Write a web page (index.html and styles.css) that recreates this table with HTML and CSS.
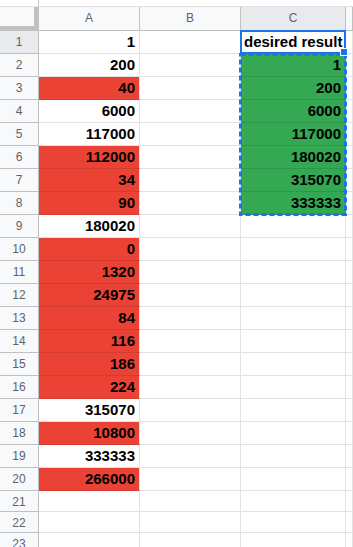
FILE: index.html
```html
<!DOCTYPE html>
<html>
<head>
<meta charset="utf-8">
<link rel="stylesheet" href="styles.css">
</head>
<body>
<div class="sheet">
  <div class="top first"></div><div class="top"></div><div class="top"></div><div class="top"></div><div class="top"></div>
  <div class="corner"></div><div class="ch">A</div><div class="ch">B</div><div class="ch sel">C</div><div class="ch"></div>

  <div class="rh sel">1</div><div class="c num">1</div><div class="c"></div><div class="c txt">desired result</div><div class="c"></div>
  <div class="rh">2</div><div class="c num">200</div><div class="c"></div><div class="c num g">1</div><div class="c"></div>
  <div class="rh">3</div><div class="c num r">40</div><div class="c"></div><div class="c num g">200</div><div class="c"></div>
  <div class="rh">4</div><div class="c num">6000</div><div class="c"></div><div class="c num g">6000</div><div class="c"></div>
  <div class="rh">5</div><div class="c num">117000</div><div class="c"></div><div class="c num g">117000</div><div class="c"></div>
  <div class="rh">6</div><div class="c num r">112000</div><div class="c"></div><div class="c num g">180020</div><div class="c"></div>
  <div class="rh">7</div><div class="c num r">34</div><div class="c"></div><div class="c num g">315070</div><div class="c"></div>
  <div class="rh">8</div><div class="c num r">90</div><div class="c"></div><div class="c num g">333333</div><div class="c"></div>
  <div class="rh">9</div><div class="c num">180020</div><div class="c"></div><div class="c"></div><div class="c"></div>
  <div class="rh">10</div><div class="c num r">0</div><div class="c"></div><div class="c"></div><div class="c"></div>
  <div class="rh">11</div><div class="c num r">1320</div><div class="c"></div><div class="c"></div><div class="c"></div>
  <div class="rh">12</div><div class="c num r">24975</div><div class="c"></div><div class="c"></div><div class="c"></div>
  <div class="rh">13</div><div class="c num r">84</div><div class="c"></div><div class="c"></div><div class="c"></div>
  <div class="rh">14</div><div class="c num r">116</div><div class="c"></div><div class="c"></div><div class="c"></div>
  <div class="rh">15</div><div class="c num r">186</div><div class="c"></div><div class="c"></div><div class="c"></div>
  <div class="rh">16</div><div class="c num r">224</div><div class="c"></div><div class="c"></div><div class="c"></div>
  <div class="rh">17</div><div class="c num">315070</div><div class="c"></div><div class="c"></div><div class="c"></div>
  <div class="rh">18</div><div class="c num r">10800</div><div class="c"></div><div class="c"></div><div class="c"></div>
  <div class="rh">19</div><div class="c num">333333</div><div class="c"></div><div class="c"></div><div class="c"></div>
  <div class="rh">20</div><div class="c num r">266000</div><div class="c"></div><div class="c"></div><div class="c"></div>
  <div class="rh">21</div><div class="c"></div><div class="c"></div><div class="c"></div><div class="c"></div>
  <div class="rh">22</div><div class="c"></div><div class="c"></div><div class="c"></div><div class="c"></div>
  <div class="rh">23</div><div class="c"></div><div class="c"></div><div class="c"></div><div class="c"></div>

  <div class="active"></div>
  <svg class="copy" width="108" height="163" viewBox="0 0 108 163"><rect x="1.5" y="1.5" width="105" height="160" fill="none" stroke="#1a73e8" stroke-width="3" stroke-dasharray="5 3"/></svg>
  <div class="handle"></div>
</div>
</body>
</html>
```
FILE: styles.css
```css
html, body {
  margin: 0;
  padding: 0;
  background: #fff;
  overflow: hidden;
}
.sheet {
  position: relative;
  display: grid;
  grid-template-columns: 39px 101px 101px 105px 7px;
  grid-template-rows: 7px 24px repeat(20, 23px) repeat(3, 21px);
  width: 353px;
  height: 547px;
  overflow: hidden;
  font-family: "Liberation Sans", Arial, sans-serif;
}
.sheet > div {
  box-sizing: border-box;
  overflow: hidden;
  white-space: nowrap;
}
.top {
  background: #fff;
  border-bottom: 1px solid #e2e2e3;
}
.top.first {
  border-right: 1px solid #c0c0c0;
}
.corner {
  background: #f8f9fa;
  border-right: 5px solid #c0c0c0;
  border-bottom: 5px solid #c0c0c0;
}
.ch {
  background: #f8f9fa;
  border-right: 1px solid #c0c0c0;
  border-bottom: 1px solid #c0c0c0;
  color: #5f6368;
  font-size: 12px;
  line-height: 23px;
  text-align: center;
}
.rh {
  background: #f8f9fa;
  border-right: 1px solid #c0c0c0;
  border-bottom: 1px solid #c0c0c0;
  color: #5f6368;
  font-size: 12px;
  line-height: 22px;
  text-align: center;
}
.ch.sel, .rh.sel {
  background: #e8eaed;
}
.c {
  background: #fff;
  border-right: 1px solid #e2e2e3;
  border-bottom: 1px solid #e2e2e3;
  font-size: 15px;
  font-weight: bold;
  line-height: 22px;
  color: #000;
}
.num {
  text-align: right;
  padding-right: 4px;
}
.txt {
  text-align: left;
  padding-left: 3px;
}
.r {
  background: #ea4335;
  border-bottom-color: #d33c2f;
}
.g {
  background: #34a853;
  border-bottom-color: #2e964a;
  border-right-color: #2e964a;
}
.active {
  position: absolute;
  left: 240px;
  top: 30px;
  width: 106px;
  height: 24px;
  box-sizing: border-box;
  border: 2px solid #1a73e8;
}
.copy {
  position: absolute;
  left: 239px;
  top: 53px;
}
.handle {
  position: absolute;
  left: 340px;
  top: 48px;
  width: 8px;
  height: 8px;
  box-sizing: border-box;
  background: #1a73e8;
  border: 1px solid #fff;
}
```
